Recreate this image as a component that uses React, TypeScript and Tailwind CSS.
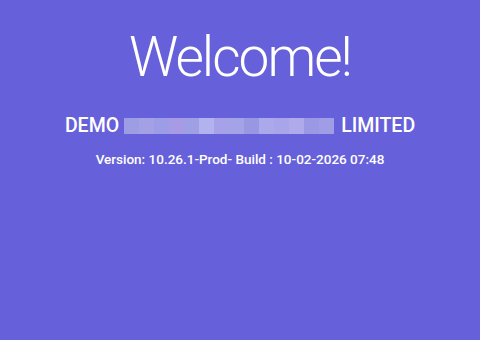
const mosaic = [
  "bg-[#9d9de6]",
  "bg-[#a3a0e6]",
  "bg-[#9c9de6]",
  "bg-[#a69be4]",
  "bg-[#9f9fe6]",
  "bg-[#b2b3ee]",
  "bg-[#a7a2e8]",
  "bg-[#a5a3e8]",
  "bg-[#9797e2]",
  "bg-[#aba8ec]",
  "bg-[#a9a5ea]",
  "bg-[#afaaea]",
  "bg-[#9b99e3]",
  "bg-[#a09de6]",
];

export default function App() {
  return (
    <div className="w-[480px] h-[340px] bg-[#6661da] text-white flex flex-col items-center font-['Roboto',sans-serif]">
      <h1 className="mt-[25px] text-[55px] leading-[64px] font-light tracking-[-2px]">Welcome!</h1>
      <div className="mt-[25px] flex items-center text-[19.5px] leading-[24px] font-medium">
        <span>DEMO</span>
        <div className="flex h-[16px] ml-[5px] mr-[7px]">
          {mosaic.map((c, i) => (
            <div key={i} className={`${c} w-[15px] h-full`} />
          ))}
        </div>
        <span>LIMITED</span>
      </div>
      <p className="mt-[12px] text-[13.5px] leading-[18px] font-medium">Version: 10.26.1-Prod- Build : 10-02-2026 07:48</p>
    </div>
  );
}
